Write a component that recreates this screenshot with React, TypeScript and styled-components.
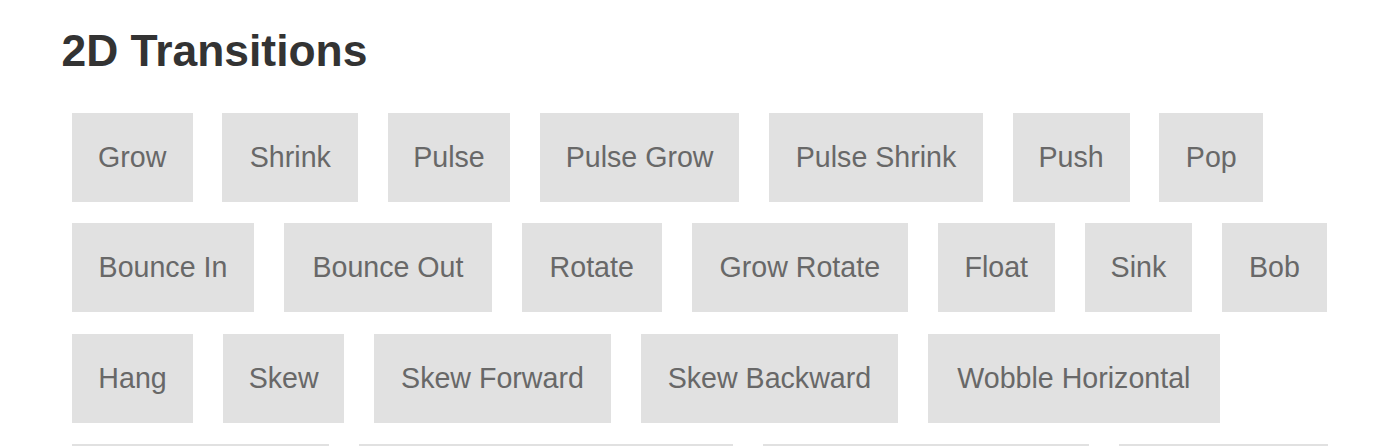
import { FC } from 'react';
import styled, { createGlobalStyle } from 'styled-components';

const GlobalStyle = createGlobalStyle`
  html,
  body {
    margin: 0;
    padding: 0;
    background: #fff;
  }

  body {
    font-family: 'Liberation Sans', Arial, sans-serif;
  }
`;

const Page = styled.main`
  padding: 0 0 0 61.5px;
`;

const Section = styled.section`
  width: 1310px;
`;

const SectionTitle = styled.h2`
  margin: 25.5px 0 0;
  font-size: 44.4px;
  line-height: 50px;
  font-weight: 700;
  color: #333;
`;

const ButtonGrid = styled.div`
  margin-top: 37.2px;
  padding-left: 10.2px;
  display: flex;
  flex-wrap: wrap;
  align-items: flex-start;
  column-gap: 29.8px;
  row-gap: 21.2px;
`;

const DemoButton = styled.a<{ $w: number }>`
  box-sizing: border-box;
  width: ${p => p.$w}px;
  height: 89.3px;
  display: flex;
  align-items: center;
  justify-content: center;
  background: #e1e1e1;
  color: #686868;
  font-size: 28.6px;
  line-height: 33px;
  white-space: nowrap;
  text-decoration: none;
  cursor: pointer;
`;

const transitions: { label: string; w: number }[] = [
  { label: 'Grow', w: 121 },
  { label: 'Shrink', w: 135.7 },
  { label: 'Pulse', w: 122 },
  { label: 'Pulse Grow', w: 199.7 },
  { label: 'Pulse Shrink', w: 213.6 },
  { label: 'Push', w: 117 },
  { label: 'Pop', w: 103.7 },
  { label: 'Bounce In', w: 182.6 },
  { label: 'Bounce Out', w: 207.7 },
  { label: 'Rotate', w: 140.3 },
  { label: 'Grow Rotate', w: 216.3 },
  { label: 'Float', w: 117 },
  { label: 'Sink', w: 107.7 },
  { label: 'Bob', w: 104.7 },
  { label: 'Hang', w: 121.7 },
  { label: 'Skew', w: 121 },
  { label: 'Skew Forward', w: 237 },
  { label: 'Skew Backward', w: 257.3 },
  { label: 'Wobble Horizontal', w: 292 },
  { label: 'Wobble Vertical', w: 257.3 },
  { label: 'Wobble To Bottom Right', w: 374.7 },
  { label: 'Wobble To Top Right', w: 326 },
  { label: 'Wobble Top', w: 208.5 },
  { label: 'Wobble Bottom', w: 240 },
  { label: 'Wobble Skew', w: 218 },
];

const App: FC = () => (
  <>
    <GlobalStyle />
    <Page>
      <Section>
        <SectionTitle>2D Transitions</SectionTitle>
        <ButtonGrid>
          {transitions.map(t => (
            <DemoButton key={t.label} $w={t.w}>
              {t.label}
            </DemoButton>
          ))}
        </ButtonGrid>
      </Section>
    </Page>
  </>
);

export default App;
